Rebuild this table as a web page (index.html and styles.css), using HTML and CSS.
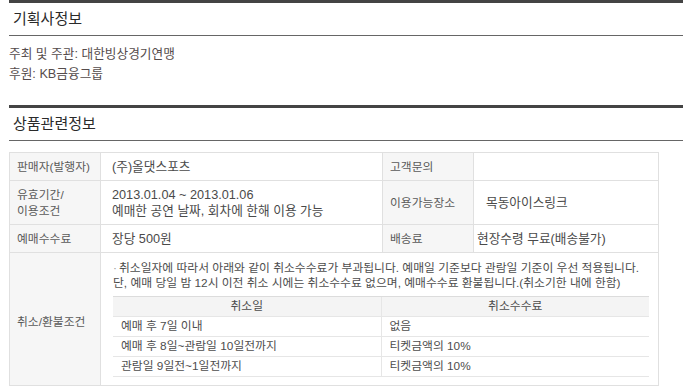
FILE: index.html
```html
<!DOCTYPE html>
<html lang="ko">
<head>
<meta charset="utf-8">
<link rel="stylesheet" href="styles.css">
</head>
<body>
<div class="page">
  <section class="sec">
    <h2 class="sec-title">기획사정보</h2>
    <div class="sec-body">
      <p class="info-line">주최 및 주관: 대한빙상경기연맹</p>
      <p class="info-line">후원: KB금융그룹</p>
    </div>
  </section>
  <section class="sec">
    <h2 class="sec-title">상품관련정보</h2>
    <table class="prod">
      <colgroup>
        <col class="c-label"><col class="c-val1"><col class="c-label"><col>
      </colgroup>
      <tr>
        <th>판매자(발행자)</th>
        <td>(주)올댓스포츠</td>
        <th>고객문의</th>
        <td class="v2"></td>
      </tr>
      <tr>
        <th>유효기간/<br>이용조건</th>
        <td>2013.01.04 ~ 2013.01.06<br>예매한 공연 날짜, 회차에 한해 이용 가능</td>
        <th>이용가능장소</th>
        <td class="v2"><span class="indent">목동아이스링크</span></td>
      </tr>
      <tr>
        <th>예매수수료</th>
        <td>장당 500원</td>
        <th>배송료</th>
        <td class="v2">현장수령 무료(배송불가)</td>
      </tr>
      <tr>
        <th class="th-tall">취소/환불조건</th>
        <td colspan="3" class="cancel">
          <p class="note"><span class="dot">·</span>취소일자에 따라서 아래와 같이 취소수수료가 부과됩니다. 예매일 기준보다 관람일 기준이 우선 적용됩니다.<br>단, 예매 당일 밤 12시 이전 취소 시에는 취소수수료 없으며, 예매수수료 환불됩니다.(취소기한 내에 한함)</p>
          <table class="fee">
            <tr><th>취소일</th><th>취소수수료</th></tr>
            <tr><td>예매 후 7일 이내</td><td>없음</td></tr>
            <tr><td>예매 후 8일~관람일 10일전까지</td><td>티켓금액의 10%</td></tr>
            <tr><td>관람일 9일전~1일전까지</td><td>티켓금액의 10%</td></tr>
          </table>
        </td>
      </tr>
    </table>
  </section>
</div>
</body>
</html>
```

FILE: styles.css
```css
* { box-sizing: border-box; }
html, body { margin: 0; padding: 0; background: #fff; }
body {
  font-family: "Liberation Sans", "Noto Sans CJK KR", sans-serif;
  color: #4a4a4a;
  overflow: hidden;
}
.page { padding-left: 9px; }

.sec-title {
  margin: 0;
  border-top: 3px solid #444;
  border-bottom: 1px solid #666;
  height: 36px;
  line-height: 32px;
  padding-left: 4px;
  font-size: 15px;
  font-weight: normal;
  color: #2a2a2a;
}
.sec-body { padding: 8px 0 21px; }
.info-line {
  margin: 0;
  font-size: 12.7px;
  line-height: 20px;
  color: #554c4c;
}

.prod {
  margin-top: 11px;
  width: 650px;
  border-collapse: collapse;
  table-layout: fixed;
  border: 1px solid #e0e0e0;
}
.c-label { width: 91px; }
.c-val1 { width: 282px; }
.prod > tbody > tr > th,
.prod > tbody > tr > td {
  border: 1px solid #e0e0e0;
  padding: 6px 8px 5px;
  line-height: 16px;
  text-align: left;
  vertical-align: middle;
}
.prod > tbody > tr > th {
  background: #f6f6f6;
  font-weight: normal;
  font-size: 11.8px;
  color: #5a5a5a;
  padding-left: 7px;
}
.prod > tbody > tr > td {
  font-size: 12.7px;
  color: #4a4a4a;
  padding-left: 11px;
}
.prod > tbody > tr > td.v2 { padding-left: 3px; }
.indent { margin-left: 9px; }
.prod > tbody > tr > th.th-tall { padding-top: 10px; }

.prod > tbody > tr > td.cancel {
  padding: 8px 9px 8px 12px;
  font-size: 11.8px;
  vertical-align: top;
}
.note {
  margin: 0;
  line-height: 15px;
  color: #4d4d4d;
  white-space: nowrap;
}
.dot { color: #999; margin-right: 2px; }

.fee {
  margin-top: 5px;
  width: 100%;
  border-collapse: collapse;
  table-layout: fixed;
}
.fee th, .fee td {
  height: 20px;
  padding: 0 8px;
  font-size: 11.8px;
  line-height: 19px;
  color: #4d4d4d;
  border-bottom: 1px solid #e6e6e6;
}
.fee th {
  background: #f4f4f4;
  border-top: 1px solid #dcdcdc;
  font-weight: normal;
  text-align: center;
}
.fee th + th, .fee td + td { border-left: 1px solid #e6e6e6; }
```
